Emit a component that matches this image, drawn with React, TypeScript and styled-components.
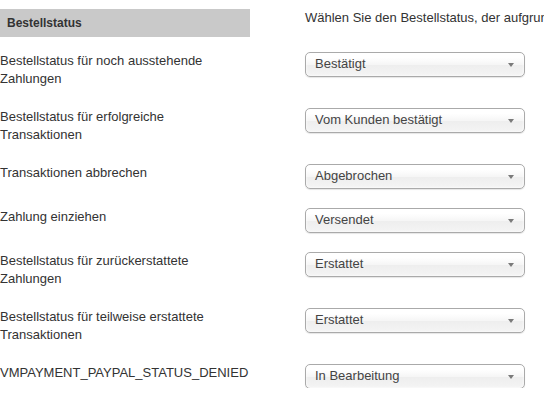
import styled, { createGlobalStyle } from 'styled-components'

const GlobalStyle = createGlobalStyle`
  html, body {
    margin: 0;
    padding: 0;
    overflow: hidden;
    background: #fff;
  }
  body {
    font-family: 'Liberation Sans', Arial, sans-serif;
    font-size: 13px;
    color: #333;
  }
`

const Page = styled.div`
  padding-top: 9px;
`

const Grid = styled.div`
  display: grid;
  grid-template-columns: 250px 220px;
  column-gap: 55px;
  align-items: start;
`

const HeaderGrid = styled(Grid)`
  margin-bottom: 15px;
`

const SectionTitle = styled.div`
  background: #c9c9c9;
  padding: 5px 7px;
  font-size: 12px;
  font-weight: bold;
  line-height: 18px;
  color: #333;
`

const Description = styled.div`
  line-height: 18px;
  white-space: nowrap;
`

const Rows = styled.div`
  display: flex;
  flex-direction: column;
  gap: 20px;
`

const Label = styled.div`
  padding-right: 18px;
  line-height: 18px;
`

const Select = styled.div`
  position: relative;
  box-sizing: border-box;
  height: 25px;
  margin-bottom: -1px;
  padding: 0 0 0 9px;
  border: 1px solid #aaa;
  border-radius: 5px;
  background: linear-gradient(#fff 20%, #f6f6f6 50%, #eee 52%, #f4f4f4 100%);
  box-shadow: 0 0 3px #fff inset, 0 1px 1px rgba(0, 0, 0, 0.1);
  color: #444;
  line-height: 22px;
  white-space: nowrap;
`

const Arrow = styled.span`
  position: absolute;
  right: 10px;
  top: 10px;
  width: 0;
  height: 0;
  border-left: 3px solid transparent;
  border-right: 3px solid transparent;
  border-top: 4px solid #7a7a7a;
`

const rows = [
  { label: 'Bestellstatus für noch ausstehende Zahlungen', value: 'Bestätigt' },
  { label: 'Bestellstatus für erfolgreiche Transaktionen', value: 'Vom Kunden bestätigt' },
  { label: 'Transaktionen abbrechen', value: 'Abgebrochen' },
  { label: 'Zahlung einziehen', value: 'Versendet' },
  { label: 'Bestellstatus für zurückerstattete Zahlungen', value: 'Erstattet' },
  { label: 'Bestellstatus für teilweise erstattete Transaktionen', value: 'Erstattet' },
  { label: 'VMPAYMENT_PAYPAL_STATUS_DENIED', value: 'In Bearbeitung' },
]

export default function App() {
  return (
    <Page>
      <GlobalStyle />
      <HeaderGrid>
        <SectionTitle>Bestellstatus</SectionTitle>
        <Description>
          Wählen Sie den Bestellstatus, der aufgrund der PayPal-Antwort gesetzt wird.
        </Description>
      </HeaderGrid>
      <Rows>
        {rows.map((row, i) => (
          <Grid key={i}>
            <Label>{row.label}</Label>
            <Select>
              {row.value}
              <Arrow />
            </Select>
          </Grid>
        ))}
      </Rows>
    </Page>
  )
}
